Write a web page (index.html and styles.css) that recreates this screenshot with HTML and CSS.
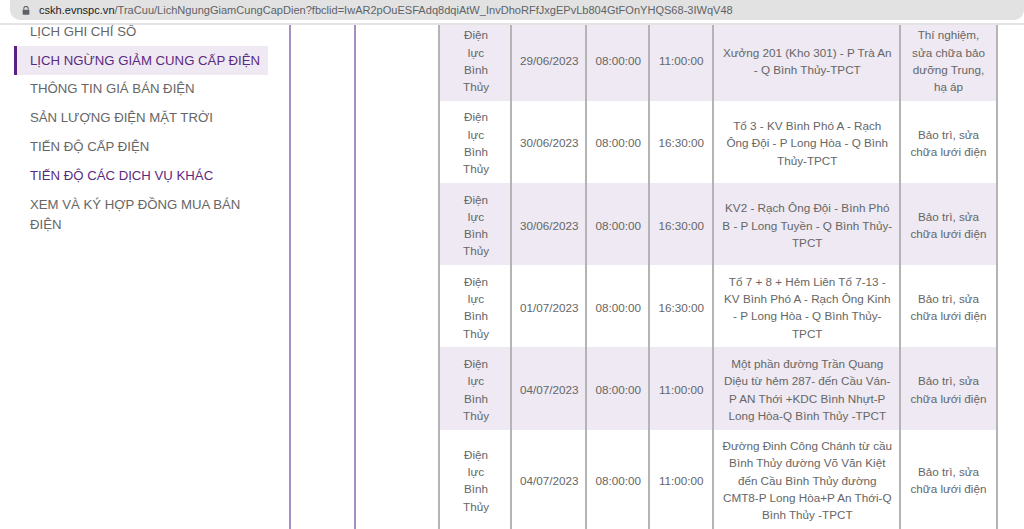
FILE: index.html
```html
<!DOCTYPE html>
<html lang="vi">
<head>
<meta charset="utf-8">
<title>Lịch ngừng giảm cung cấp điện</title>
<link rel="stylesheet" href="styles.css">
</head>
<body>
<header class="bar">
  <div class="pill">
    <svg class="lock" width="8" height="9" viewBox="0 0 10 12"><path d="M2 5V3.5a3 3 0 0 1 6 0V5" fill="none" stroke="#5f6368" stroke-width="1.4"/><rect x="0.5" y="5" width="9" height="6.5" rx="1" fill="#5f6368"/></svg>
    <span class="url"><b>cskh.evnspc.vn</b>/TraCuu/LichNgungGiamCungCapDien?fbclid=IwAR2pOuESFAdq8dqiAtW_InvDhoRFfJxgEPvLb804GtFOnYHQS68-3IWqV48</span>
  </div>
</header>
<main class="page">
  <nav class="side">
    <div class="side-list">
      <a class="item">LỊCH GHI CHỈ SỐ</a>
      <a class="item active">LỊCH NGỪNG GIẢM CUNG CẤP ĐIỆN</a>
      <a class="item">THÔNG TIN GIÁ BÁN ĐIỆN</a>
      <a class="item">SẢN LƯỢNG ĐIỆN MẶT TRỜI</a>
      <a class="item">TIẾN ĐỘ CẤP ĐIỆN</a>
      <a class="item purple">TIẾN ĐỘ CÁC DỊCH VỤ KHÁC</a>
      <a class="item">XEM VÀ KÝ HỢP ĐỒNG MUA BÁN ĐIỆN</a>
    </div>
  </nav>
  <div class="gutter"></div>
  <div class="content">
    <table class="tbl">
      <colgroup><col class="c1"><col class="c2"><col class="c3"><col class="c3"><col class="c5"><col class="c6"></colgroup>
      <tr><td>Điện lực Bình Thủy</td><td>29/06/2023</td><td>08:00:00</td><td>11:00:00</td><td>Xưởng 201 (Kho 301) - P Trà An - Q Bình Thủy-TPCT</td><td>Thí nghiệm, sửa chữa bảo dưỡng Trung, hạ áp</td></tr>
      <tr><td>Điện lực Bình Thủy</td><td>30/06/2023</td><td>08:00:00</td><td>16:30:00</td><td>Tổ 3 - KV Bình Phó A - Rạch Ông Đội - P Long Hòa - Q Bình Thủy-TPCT</td><td>Bảo trì, sửa chữa lưới điện</td></tr>
      <tr><td>Điện lực Bình Thủy</td><td>30/06/2023</td><td>08:00:00</td><td>16:30:00</td><td>KV2 - Rạch Ông Đội - Bình Phó B - P Long Tuyền - Q Bình Thủy-TPCT</td><td>Bảo trì, sửa chữa lưới điện</td></tr>
      <tr><td>Điện lực Bình Thủy</td><td>01/07/2023</td><td>08:00:00</td><td>16:30:00</td><td>Tổ 7 + 8 + Hẻm Liên Tổ 7-13 - KV Bình Phó A - Rạch Ông Kinh - P Long Hòa - Q Bình Thủy-TPCT</td><td>Bảo trì, sửa chữa lưới điện</td></tr>
      <tr><td>Điện lực Bình Thủy</td><td>04/07/2023</td><td>08:00:00</td><td>11:00:00</td><td>Một phần đường Trần Quang Diệu từ hẻm 287- đến Cầu Ván-P AN Thới +KDC Bình Nhựt-P Long Hòa-Q Bình Thủy -TPCT</td><td>Bảo trì, sửa chữa lưới điện</td></tr>
      <tr><td>Điện lực Bình Thủy</td><td>04/07/2023</td><td>08:00:00</td><td>11:00:00</td><td>Đường Đinh Công Chánh từ cầu Bình Thủy đường Võ Văn Kiệt đến Cầu Bình Thủy đường CMT8-P Long Hòa+P An Thới-Q Bình Thủy -TPCT</td><td>Bảo trì, sửa chữa lưới điện</td></tr>
    </table>
  </div>
</main>
</body>
</html>
```
FILE: styles.css
```css
* { box-sizing: border-box; }
html, body { margin: 0; height: 100%; overflow: hidden; background: #fff; }
body { font-family: "Liberation Sans", Arial, sans-serif; display: flex; flex-direction: column; }
.bar { height: 25px; flex: none; background: #fff; border-bottom: 2px solid #e4e4e4; }
.pill { height: 20px; margin-left: 10px; background: #e2e2e2; border-radius: 0 0 10px 10px; display: flex; align-items: center; padding-left: 12px; gap: 9px; }
.lock { flex: none; }
.url { font-size: 11.05px; color: #5f6368; white-space: nowrap; }
.url b { font-weight: 400; color: #202124; }
.page { flex: 1; display: flex; min-height: 0; overflow: hidden; }
.side { width: 291px; flex: none; border-right: 2px solid #a98fc0; padding: 0 21px 0 14px; }
.side-list { margin-top: -7.5px; }
.item { display: block; font-size: 13.2px; line-height: 20px; color: #666; padding: 4.4px 0 4.4px 16px; }
.item.active { background: #eee9f2; color: #5b2a80; border-left: 3px solid #5b2180; padding-left: 13px; }
.item.purple { color: #5b2a80; }
.gutter { width: 65px; flex: none; border-right: 2px solid #a98fc0; }
.content { flex: 1; min-width: 0; padding-left: 82px; overflow: hidden; }
.tbl { width: 558px; table-layout: fixed; border-collapse: collapse; margin-top: -6.3px; font-size: 11.7px; line-height: 17.3px; color: #666; text-align: center; }
.c1 { width: 72px; } .c2 { width: 74.5px; } .c3 { width: 63.5px; } .c5 { width: 187.5px; } .c6 { width: 97px; }
.tbl td { border-left: 2px solid #b4b4b4; border-right: 2px solid #b4b4b4; padding: 7.5px 8.5px 5.5px; vertical-align: middle; }
.tbl td:first-child { padding-left: 16px; padding-right: 14px; }
.tbl td:nth-child(n+2):nth-child(-n+3) { padding-left: 4px; padding-right: 2px; }
.tbl td:nth-child(4) { padding-left: 3px; padding-right: 2px; }
.tbl td:nth-child(5) { padding-left: 8px; padding-right: 6px; }
.tbl tr:nth-child(odd) td { background: #eee9f2; }
```
